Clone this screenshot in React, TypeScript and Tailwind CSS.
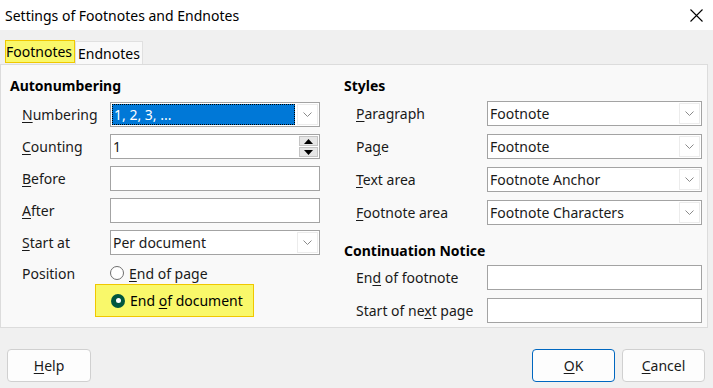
import { type ReactNode } from "react";

function U({ children }: { children: ReactNode }) {
  return <span className="underline underline-offset-2">{children}</span>;
}

function Chevron() {
  return (
    <svg width="9" height="5" viewBox="0 0 9 5" className="text-[#8a8a8a]">
      <path d="M0.5 0.5 L4.5 4.5 L8.5 0.5" fill="none" stroke="currentColor" strokeWidth="1" />
    </svg>
  );
}

function Select({ value, focused, width }: { value: string; focused?: boolean; width: string }) {
  return (
    <div className={`flex h-[25px] ${width} border border-[#a3a3a3] bg-white`}>
      <div className="flex flex-1 items-center p-[1px]">
        {focused ? (
          <div className="flex h-full w-full items-center border border-dotted border-black bg-[#0078d7] px-[1px] text-white">
            {value}
          </div>
        ) : (
          <span className="pl-[1px]">{value}</span>
        )}
      </div>
      <div className="m-[1px] flex w-[21px] items-center justify-center border border-[#ececec] bg-white">
        <Chevron />
      </div>
    </div>
  );
}

function TextBox({ value, width }: { value?: string; width: string }) {
  return (
    <div className={`flex h-[25px] ${width} items-center border border-[#a3a3a3] bg-white pl-[2px]`}>
      {value}
    </div>
  );
}

function Spin({ value }: { value: string }) {
  return (
    <div className="flex h-[25px] w-[210px] border border-[#a3a3a3] bg-white">
      <div className="flex flex-1 items-center pl-[2px]">{value}</div>
      <div className="flex w-[20px] flex-col gap-[1px] py-[1px] pr-[1px]">
        <div className="flex flex-1 items-center justify-center border border-[#c4c4c4] bg-[#e6e6e6]">
          <svg width="9" height="5" viewBox="0 0 9 5">
            <path d="M0 5 L4.5 0 L9 5 Z" fill="#000" />
          </svg>
        </div>
        <div className="flex flex-1 items-center justify-center border border-[#c4c4c4] bg-[#e6e6e6]">
          <svg width="9" height="5" viewBox="0 0 9 5">
            <path d="M0 0 L4.5 5 L9 0 Z" fill="#000" />
          </svg>
        </div>
      </div>
    </div>
  );
}

function Row({ label, labelWidth, children }: { label: ReactNode; labelWidth: string; children: ReactNode }) {
  return (
    <div className="flex items-center">
      <div className={labelWidth}>{label}</div>
      {children}
    </div>
  );
}

function Btn({ children, primary, width }: { children: ReactNode; primary?: boolean; width: string }) {
  return (
    <button
      type="button"
      className={`flex h-[33px] ${width} items-center justify-center rounded-[4px] border bg-[#fdfdfd] ${
        primary ? "border-[#0067c0]" : "border-[#d0d0d0]"
      }`}
    >
      {children}
    </button>
  );
}

export default function App() {
  return (
    <div
      className="flex h-[388px] w-[713px] flex-col bg-[#f0f0f0] text-[14px] text-[#1a1a1a]"
      style={{ fontFamily: '"Noto Sans", sans-serif' }}
    >
      <div className="flex h-[30px] items-center justify-between bg-white pl-[5px] pr-[10px]">
        <span className="text-black">Settings of Footnotes and Endnotes</span>
        <svg width="13" height="13" viewBox="0 0 13 13">
          <path d="M0.5 0.5 L12.5 12.5 M12.5 0.5 L0.5 12.5" stroke="#000" strokeWidth="1.1" />
        </svg>
      </div>

      <div className="mt-[10px] flex items-end pl-[5px]">
        <div className="flex h-[23px] items-center border border-[#f0c800] bg-[#f9f86a] pr-[2px] text-black">
          Footnotes
        </div>
        <div className="mb-[-1px] flex h-[23px] items-center border border-b-0 border-[#e0e0e0] bg-[#f9f9f9] px-[2px] text-black">
          Endnotes
        </div>
      </div>

      <div className="mr-[5px] mt-[1px] flex h-[264px] border border-[#dcdcdc] bg-[#f9f9f9] pt-[10px]">
        <div className="flex w-[343px] flex-col pl-[9px]">
          <div className="font-bold text-black">Autonumbering</div>
          <div className="mt-[6px] flex flex-col gap-[7px] pl-[12px]">
            <Row labelWidth="w-[88px]" label={<><U>N</U>umbering</>}>
              <Select value="1, 2, 3, ..." focused width="w-[210px]" />
            </Row>
            <Row labelWidth="w-[88px]" label={<><U>C</U>ounting</>}>
              <Spin value="1" />
            </Row>
            <Row labelWidth="w-[88px]" label={<><U>B</U>efore</>}>
              <TextBox width="w-[210px]" />
            </Row>
            <Row labelWidth="w-[88px]" label={<><U>A</U>fter</>}>
              <TextBox width="w-[210px]" />
            </Row>
            <Row labelWidth="w-[88px]" label={<><U>S</U>tart at</>}>
              <Select value="Per document" width="w-[210px]" />
            </Row>
            <div className="flex flex-col">
              <div className="flex h-[22px] items-center">
                <div className="w-[88px]">Position</div>
                <div className="flex items-center gap-[5px]">
                  <span className="h-[14px] w-[14px] rounded-full border border-[#6e6e6e] bg-white" />
                  <span>
                    <U>E</U>nd of page
                  </span>
                </div>
              </div>
              <div className="ml-[73px] flex h-[33px] w-[159px] items-center gap-[5px] border border-[#f0c800] bg-[#f9f86a] pl-[15px] text-black">
                <span className="flex h-[14px] w-[14px] items-center justify-center rounded-full bg-[#00563f]">
                  <span className="h-[5px] w-[5px] rounded-full bg-white" />
                </span>
                <span>
                  End <U>o</U>f document
                </span>
              </div>
            </div>
          </div>
        </div>

        <div className="flex flex-col">
          <div className="font-bold text-black">Styles</div>
          <div className="mt-[5px] flex flex-col gap-[8px] pl-[12px]">
            <Row labelWidth="w-[131px]" label={<><U>P</U>aragraph</>}>
              <Select value="Footnote" width="w-[215px]" />
            </Row>
            <Row labelWidth="w-[131px]" label={<>Pa<U>g</U>e</>}>
              <Select value="Footnote" width="w-[215px]" />
            </Row>
            <Row labelWidth="w-[131px]" label={<><U>T</U>ext area</>}>
              <Select value="Footnote Anchor" width="w-[215px]" />
            </Row>
            <Row labelWidth="w-[131px]" label={<><U>F</U>ootnote area</>}>
              <Select value="Footnote Characters" width="w-[215px]" />
            </Row>
          </div>
          <div className="mt-[15px] font-bold text-black">Continuation Notice</div>
          <div className="mt-[4px] flex flex-col gap-[8px] pl-[12px]">
            <Row labelWidth="w-[131px]" label={<>En<U>d</U> of footnote</>}>
              <TextBox width="w-[215px]" />
            </Row>
            <Row labelWidth="w-[131px]" label={<>Start of ne<U>x</U>t page</>}>
              <TextBox width="w-[215px]" />
            </Row>
          </div>
        </div>
      </div>

      <div className="mt-[21px] flex items-center px-[7px]">
        <Btn width="w-[84px]">
          <U>H</U>elp
        </Btn>
        <div className="flex-1" />
        <div className="flex gap-[7px] pr-[1px]">
          <Btn primary width="w-[83px]">
            <U>O</U>K
          </Btn>
          <Btn width="w-[83px]">
            <U>C</U>ancel
          </Btn>
        </div>
      </div>
    </div>
  );
}
